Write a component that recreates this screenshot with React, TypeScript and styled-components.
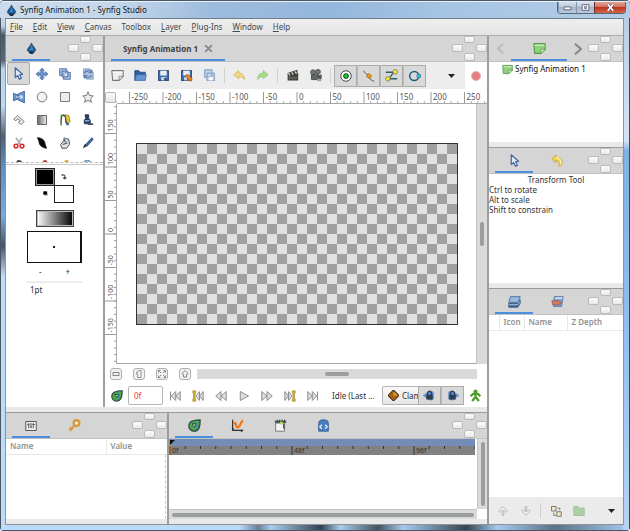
import React, { useState } from "react";
import type { ReactNode } from "react";
import styled, { createGlobalStyle } from "styled-components";

const GlobalStyle = createGlobalStyle`
  * { box-sizing: border-box; }
  html, body, #root { height: 100%; }
  body {
    margin: 0;
    overflow: hidden;
    font: 8px/10px "Noto Sans", "Open Sans", sans-serif;
    color: #2b2f31;
  }
  button, input {
    font: inherit;
    color: inherit;
    margin: 0;
    padding: 0;
    border: 0;
    background: none;
  }
  svg { display: block; flex: none; }
`;

/* ---------- window frame ---------- */

const Frame = styled.div`
  display: flex;
  flex-direction: column;
  height: 100vh;
  min-height: 480px;
  padding: 0 6px 6px 5px;
  border-radius: 4px;
  border-top: 1px solid #4b5865;
  background:
    linear-gradient(to right, #4a5662 0 1px, transparent 1px),
    linear-gradient(to left, #3c4a58 0 1px, transparent 1px),
    linear-gradient(to top, #46586a 0 1px, transparent 1px),
    linear-gradient(#c9d9ea 0, #bfd3ea 25px, #46586c 34px, #59697c 60px, #bcd5ef 68px, #bcd9f5 105px, #4d6075 135px, #5f8fbd 165px, #77acdb 215px, #45536a 245px, #bfdcf8 275px, #bcdcfa 100%) left / 6px 100% no-repeat,
    linear-gradient(#b5cbe4 0, #d5e4f4 140px, #7fb0e6 150px, #8cbcf0 300px, #b6d4f2 100%) right / 7px 100% no-repeat,
    linear-gradient(to right, #b9daf9 0 38%, #6b7f93 41%, #a8cdee 43%, #34424f 51%, #a9ccea 54%, #45525f 60%, #a5caeb 64%, #37444f 74%, #a5cbed 79%, #5c7186 88%, #a5cbed 100%) bottom / 100% 7px no-repeat,
    #a9c6e3;
`;

const TitleBar = styled.header`
  display: flex;
  align-items: flex-start;
  flex: none;
  height: 17px;
  margin: 0 -6px 0 -5px;
  padding-left: 6px;
  border-radius: 4px 4px 0 0;
  border-top: 1px solid #e7f0f8;
  background: linear-gradient(100deg, #ccdbeb 0, #c5d8eb 18%, #9dbbdd 34%, #94b7dc 52%, #a6c4e3 70%, #b3cce6 100%);
`;

const AppTitle = styled.h1`
  display: flex;
  align-items: center;
  gap: 3px;
  flex: 1;
  height: 16px;
  margin: 0;
  font-size: 8px;
  font-weight: 400;
  color: #101820;
`;

const WindowButtons = styled.div`
  display: flex;
  height: 12px;
  margin-right: 4px;
  border: 1px solid #56667a;
  border-top: 0;
  border-radius: 0 0 4px 4px;
  overflow: hidden;
`;

const WindowButton = styled.button<{ $close?: boolean }>`
  display: grid;
  place-items: center;
  width: ${(p) => (p.$close ? 31 : 18)}px;
  border-left: ${(p) => (p.$close ? "1px solid #6d2c25" : "1px solid #8799ae")};
  background: ${(p) =>
    p.$close
      ? "linear-gradient(#e3a394 0, #d17360 45%, #bf3620 50%, #d26746 100%)"
      : "linear-gradient(#d5e0ec 0, #bccbdc 45%, #a2b5cb 50%, #b9cade 100%)"};
`;

const Client = styled.div`
  display: flex;
  flex-direction: column;
  flex: 1;
  min-height: 0;
  border: 1px solid #8d9499;
  border-top-color: #6f7d8b;
  background: #e9e9e9;
`;

const MenuBar = styled.nav`
  display: flex;
  align-items: center;
  flex: none;
  gap: 10px;
  height: 17px;
  padding-left: 4px;
  background: linear-gradient(#efefef, #e4e4e4);
  border-bottom: 1px solid #adadad;
`;

const MenuItem = styled.button`
  color: #44484a;
  white-space: nowrap;
`;

/* ---------- docks ---------- */

const Workspace = styled.main`
  display: flex;
  flex: 1;
  min-height: 0;
`;

const Column = styled.div`
  display: flex;
  flex-direction: column;
  flex: 1;
  min-width: 0;
`;

const UpperRow = styled.div`
  display: flex;
  flex: 1;
  min-height: 0;
`;

const LowerRow = styled.div`
  display: flex;
  flex: none;
  height: 111px;
`;

const RightDock = styled.aside`
  display: flex;
  flex-direction: column;
  flex: none;
  width: 136px;
  border-left: 2px solid #9d9d9d;
`;

const Panel = styled.section<{ $width?: number; $height?: number; $divided?: boolean }>`
  display: flex;
  flex-direction: column;
  flex: ${(p) => (p.$width || p.$height ? "none" : "1")};
  width: ${(p) => (p.$width ? `${p.$width}px` : "auto")};
  height: ${(p) => (p.$height ? `${p.$height}px` : "auto")};
  min-width: 0;
  min-height: 0;
  background: #fff;
  border-right: ${(p) => (p.$divided ? "2px solid #9d9d9d" : "0")};
`;

const Splitter = styled.div`
  flex: none;
  height: 6px;
  background: #e9e9e9;
  border-bottom: 1px solid #9a9a9a;
`;

const TabBar = styled.div`
  display: flex;
  flex: none;
  align-items: stretch;
  height: 26px;
  padding-left: 6px;
  gap: 5px;
  overflow: hidden;
  background: #d5d5d5;
  border-bottom: 1px solid #c2c2c2;
`;

const Tab = styled.button<{ $active?: boolean; $width?: number }>`
  display: flex;
  align-items: center;
  justify-content: center;
  gap: 6px;
  width: ${(p) => p.$width ?? 38}px;
  border-top: 2px solid transparent;
  border-bottom: 2px solid ${(p) => (p.$active ? "#4a8fdc" : "transparent")};
  font-weight: 700;
  color: #3c4042;
  white-space: nowrap;
`;

const ArrowButton = styled.button`
  display: grid;
  place-items: center;
  width: 11px;
`;

const ClusterBox = styled.div`
  display: grid;
  flex: none;
  grid-template: 7px 8px 8px / 11px 11px 11px;
  gap: 1px;
  margin-left: auto;
`;

const ClusterButton = styled.button<{ $cell: string }>`
  grid-area: ${(p) => p.$cell};
  border: 1px solid #b9b9b9;
  border-radius: 2px;
  background: linear-gradient(#fbfbfb, #e9e9e9);
`;

function DockCluster() {
  return (
    <ClusterBox>
      <ClusterButton $cell="1 / 2" aria-label="Dock above" />
      <ClusterButton $cell="2 / 1" aria-label="Dock left" />
      <ClusterButton $cell="2 / 3" aria-label="Dock right" />
      <ClusterButton $cell="3 / 2" aria-label="Dock below" />
    </ClusterBox>
  );
}

/* ---------- toolbox ---------- */

const ToolGrid = styled.div`
  display: grid;
  grid-template-columns: repeat(4, 1fr);
  grid-auto-rows: 23px;
  flex: none;
  height: 101px;
  padding: 0 3px 0 1px;
  overflow: hidden;
  border-bottom: 1px dashed #bcbcbc;
`;

const ToolButton = styled.button<{ $active?: boolean }>`
  display: grid;
  place-items: center;
  border: 1px solid ${(p) => (p.$active ? "#a9a9a9" : "transparent")};
  border-radius: 2px;
  background: ${(p) => (p.$active ? "#d8d8d8" : "transparent")};
`;

const Defaults = styled.div`
  display: flex;
  flex-direction: column;
  align-items: center;
  flex: 1;
  margin-top: 1px;
  padding-top: 3px;
  border-top: 1px solid #c9c9c9;
`;

const ColorGrid = styled.div`
  display: grid;
  grid-template-columns: 19px 19px;
  grid-template-rows: 17px 17px;
  place-items: center;
`;

const Swatch = styled.button<{ $color: string }>`
  width: 20px;
  height: 18px;
  border: 1px solid #222;
  box-shadow: inset 0 0 0 1px ${(p) => (p.$color === "#000" ? "#999" : "#fff")};
  background: ${(p) => p.$color};
`;

const MiniButton = styled.button`
  display: grid;
  place-items: center;
`;

const GradientButton = styled.button`
  width: 38px;
  height: 17px;
  margin-top: 8px;
  border: 1px solid #444;
  box-shadow: inset 0 0 0 1px #bbb;
  background: linear-gradient(to right, #fff, #000);
`;

const BrushPreview = styled.div`
  display: grid;
  place-items: center;
  width: 55px;
  height: 32px;
  margin-top: 4px;
  border: 1px solid #111;
  border-right-width: 2px;
  &::after {
    content: "";
    width: 2px;
    height: 2px;
    background: #222;
  }
`;

const BrushSteps = styled.div`
  display: flex;
  justify-content: space-around;
  width: 55px;
  height: 18px;
`;

const SizeField = styled.input`
  width: 55px;
  height: 14px;
  padding-left: 3px;
  border-top: 2px solid #ececec;
`;

/* ---------- canvas ---------- */

const Toolbar = styled.div`
  display: flex;
  align-items: center;
  flex: none;
  height: 27px;
  padding-left: 1px;
  background: #ededed;
`;

const ToolItem = styled.button`
  display: grid;
  place-items: center;
  flex: none;
  width: 23px;
  height: 22px;
`;

const Toggle = styled.button`
  display: grid;
  place-items: center;
  flex: none;
  width: 23px;
  height: 22px;
  border: 1px solid #ababab;
  background: #d9d9d9;
  & + & { border-left-color: #b9b9b9; }
`;

const Separator = styled.i`
  flex: none;
  width: 1px;
  height: 15px;
  margin: 0 3px;
  background: #d0d0d0;
`;

const Spring = styled.span`
  flex: 1;
`;

const RecordButton = styled.button`
  display: grid;
  place-items: center;
  align-self: stretch;
  width: 22px;
  margin-left: 2px;
  background: #fff;
`;

const CanvasGrid = styled.div`
  display: grid;
  flex: 1;
  grid-template-columns: 12px minmax(0, 1fr) 10px;
  grid-template-rows: 15px minmax(0, 1fr);
  min-height: 0;
`;

const Corner = styled.button`
  margin: 3px 1px 1px 0;
  border: 1px solid #b5b5b5;
  border-radius: 2px;
  background: linear-gradient(#fafafa, #e6e6e6);
`;

const RulerTop = styled.div`
  display: flex;
  grid-column: 2 / 4;
  justify-content: center;
  padding-right: 10px;
  border-bottom: 1px solid #a8a8a8;
  svg { overflow: visible; }
`;

const RulerSide = styled.div`
  display: flex;
  align-items: center;
  overflow: hidden;
  border-right: 1px solid #a8a8a8;
`;

const Viewport = styled.div`
  display: grid;
  place-content: center;
  overflow: hidden;
  border-bottom: 1px solid #a8a8a8;
  border-right: 1px solid #c4c4c4;
`;

const Artboard = styled.div`
  width: 322px;
  height: 182px;
  border: 1px solid #333;
  background: repeating-conic-gradient(#a0a0a0 0 25%, #e1e1e1 0 50%) 0 0 / 20px 20px;
`;

const ScrollTrack = styled.div<{ $vertical?: boolean }>`
  display: flex;
  flex: 1;
  align-items: center;
  justify-content: center;
  flex-direction: ${(p) => (p.$vertical ? "column" : "row")};
  padding: ${(p) => (p.$vertical ? "3px 0" : "0 3px")};
  min-width: 0;
  background: #dadada;
`;

const ScrollThumb = styled.div<{ $vertical?: boolean; $length: string }>`
  width: ${(p) => (p.$vertical ? "4px" : p.$length)};
  height: ${(p) => (p.$vertical ? p.$length : "4px")};
  border-radius: 2px;
  background: #9b9e9e;
`;

const ZoomRow = styled.div`
  display: flex;
  align-items: center;
  flex: none;
  gap: 11px;
  height: 20px;
  padding: 0 10px 0 5px;
  ${ScrollTrack} { height: 10px; margin-left: -5px; }
`;

const ZoomButton = styled.button`
  display: grid;
  place-items: center;
  width: 12px;
  height: 12px;
  border: 1px solid #b0b0b0;
  border-radius: 3px;
  background: #f1f1f1;
`;

const PlayRow = styled.div`
  display: flex;
  align-items: center;
  flex: none;
  height: 23px;
`;

const FrameField = styled.input`
  flex: none;
  width: 35px;
  height: 19px;
  padding-left: 5px;
  border: 1px solid #b5b5b5;
  border-radius: 2px;
  color: #f33;
`;

const Status = styled.output`
  flex: 1;
  min-width: 0;
  padding-left: 8px;
  white-space: nowrap;
`;

const InterpolationButton = styled.button`
  display: flex;
  align-items: center;
  flex: none;
  gap: 3px;
  width: 36px;
  height: 19px;
  padding-left: 5px;
  overflow: hidden;
  border: 1px solid #b5b5b5;
  border-right: 0;
  border-radius: 2px 0 0 2px;
  background: linear-gradient(#f8f8f8, #e6e6e6);
`;

const LockToggle = styled(Toggle)`
  height: 19px;
`;

/* ---------- lists ---------- */

const TreeTable = styled.table`
  width: 100%;
  border-collapse: collapse;
  table-layout: fixed;
  th {
    height: 15px;
    padding: 0 0 0 4px;
    text-align: left;
    font-weight: 600;
    color: #929292;
    border-bottom: 1px solid #e8e8e8;
  }
  th + th { border-left: 1px solid #e8e8e8; }
`;

const Fill = styled.div<{ $dashed?: boolean }>`
  flex: 1;
  min-height: 0;
  margin-right: 1px;
  border-right: ${(p) => (p.$dashed ? "1px dashed #c8c8c8" : "0")};
`;

const FootBand = styled.div`
  flex: none;
  height: 5px;
  background: #e9e9e9;
`;

const CanvasList = styled.ul`
  margin: 0;
  padding: 1px 13px;
  list-style: none;
`;

const CanvasEntry = styled.li`
  display: flex;
  align-items: center;
  gap: 2px;
  height: 12px;
  color: #111;
`;

const Hints = styled.div`
  color: #333;
  h2 {
    margin: 0;
    padding: 1px 0 0;
    font-size: 8px;
    font-weight: 400;
    text-align: center;
  }
  p { margin: 0; }
`;

const LayerBar = styled.div`
  display: flex;
  align-items: center;
  flex: none;
  height: 27px;
  padding-left: 2px;
  background: #ebebeb;
`;

/* ---------- timeline ---------- */

const TimeBody = styled.div`
  display: flex;
  flex: 1;
  min-height: 0;
`;

const TimeMain = styled.div`
  display: flex;
  flex-direction: column;
  flex: 1;
  min-width: 0;
`;

const TimeScale = styled.div`
  flex: none;
  height: 16px;
  margin-right: 2px;
  overflow: hidden;
  background: linear-gradient(#738db6 0 7px, #818181 7px);
`;

const ScrollRow = styled.div`
  display: flex;
  flex: none;
  height: 10px;
  border-top: 1px solid #c4c4c4;
`;

const ScrollSide = styled.div`
  display: flex;
  flex: none;
  width: 10px;
  margin-bottom: 10px;
  border-left: 1px solid #c4c4c4;
`;

/* ---------- drawings ---------- */

function Icon({ size = 12, children }: { size?: number; children: ReactNode }) {
  return (
    <svg width={size} height={size} viewBox="0 0 16 16" fill="none" strokeLinejoin="round" aria-hidden="true">
      {children}
    </svg>
  );
}

const Drop = () => (
  <Icon size={11}>
    <path d="M8 0C9 4 14 7 14 11L11 14H5L2 11C2 7 7 4 8 0Z" fill="#175a98" stroke="#24384c" />
    <path d="M8 3L5 10L8 13L11 10Z" fill="#2f86ca" />
    <path d="M4 13L8 11L12 13L10 16H6Z" fill="#243443" />
  </Icon>
);

const Pointer = ({ size = 13 }: { size?: number }) => (
  <Icon size={size}>
    <path d="M4 1V13L7 10.500L9 15L11.500 14L9.500 9.500L13 9Z" fill="#dfe8f5" stroke="#4569a0" strokeWidth="1.500" />
  </Icon>
);

const Page = ({ color, edge, size = 13 }: { color: string; edge: string; size?: number }) => (
  <Icon size={size}>
    <path d="M1 2H15V9L10 14H2Z" fill={color} stroke={edge} strokeWidth="1.300" />
    <path d="M2 4H14" stroke="#fff" strokeOpacity=".5" strokeWidth="2" />
    <path d="M15 9H10V14Z" fill="#fff" stroke={edge} />
  </Icon>
);

const Layers = () => (
  <Icon size={13}>
    <path d="M1 10H12L15 6V10L12 15H1Z" fill="#39659d" stroke="#2b4c77" />
    <path d="M1 9L3 2H15L13 9Z" fill="#9ab7dc" stroke="#3f689c" />
    <path d="M1 12H12L15 8" stroke="#cfdef0" />
  </Icon>
);

const TimeDrop = ({ size = 13 }: { size?: number }) => (
  <Icon size={size}>
    <path d="M15 1C15 9 14 15 7.500 15A6.500 6.500 0 0 1 1 8C1 2 8 1 15 1Z" fill="#4aa846" stroke="#34474e" strokeWidth="1.500" />
    <path d="M8 4C11 4 12 5 12 8S10 12 8 12Z" fill="#4c86cc" />
    <path d="M5 6L10 6L8 10Z" fill="#c6e58a" stroke="#1d3c31" />
  </Icon>
);

const Undo = ({ flip, color = "#e6c64e", edge = "#d6b54c" }: { flip?: boolean; color?: string; edge?: string }) => (
  <Icon size={13}>
    <path
      d={flip ? "M15 7L9 2V5C4 5 2 8 2 13C4 10 6 9.500 9 9.500V12Z" : "M1 7L7 2V5C12 5 14 8 14 13C12 10 10 9.500 7 9.500V12Z"}
      fill={color}
      stroke={edge}
    />
  </Icon>
);

const Caret = () => (
  <svg width="7" height="4" viewBox="0 0 7 4" aria-hidden="true">
    <path d="M0 0H7L3.500 4Z" fill="#222" />
  </svg>
);

const Floppy = ({ mark }: { mark?: boolean }) => (
  <Icon size={13}>
    <path d="M2 2H14V14H2Z" fill="#4271ae" stroke="#2b4c7a" strokeWidth="1.300" />
    <path d="M4 2H12V8H4Z" fill="#e8eef5" />
    <path d="M5 10H11V14H5Z" fill="#c9d3de" />
    <path d="M9 11H11V14H9Z" fill="#27405f" />
    {mark && <path d="M7 8L9 6L15 12L14 15L11 14Z" fill="#ee8120" stroke="#a65b20" strokeWidth=".7" />}
  </Icon>
);

const toolDrawings: [string, ReactNode][] = [
  ["Transform", <Pointer />],
  ["Smooth move", <Icon><path d="M8 0L11 3.500H9.500V6.500H12.500V5L16 8L12.500 11V9.500H9.500V12.500H11L8 16L5 12.500H6.500V9.500H3.500V11L0 8L3.500 5V6.500H6.500V3.500H5Z" fill="#6f93c9" stroke="#4a70ab" /></Icon>],
  ["Scale", <Icon><path d="M1 1H10V10H1ZM6 6H15V15H6Z" fill="#a9bfdf" stroke="#5f7fb2" strokeWidth="1.500" /><path d="M4 4H12V12H4Z" fill="#8aa6d0" stroke="#4b6da4" /><path d="M6 6L10 10M10 7V10H7" stroke="#e4ecf7" strokeWidth="1.300" /></Icon>],
  ["Rotate", <Icon><path d="M2 1H10L15 6V15H6L2 11Z" fill="#a9bedd" stroke="#7f99c2" /><path d="M3 7C4 3 11 3 13 5M13 2V6H9M13 10C11 13 5 13 3 11M3 14V10H7" stroke="#5778ac" strokeWidth="1.600" /></Icon>],
  ["Mirror", <Icon><path d="M0 3L6 5V11L0 13ZM16 0L7 4V12L16 16Z" fill="#6f97cf" stroke="#3d659f" strokeWidth="1.300" /><path d="M4 8H12M10 5.500L12.500 8L10 10.500" stroke="#dfeaf8" strokeWidth="1.500" /></Icon>],
  ["Circle", <Icon><circle cx="8" cy="8" r="6.500" fill="#f1f1f1" stroke="#777" strokeWidth="1.300" /></Icon>],
  ["Rectangle", <Icon><path d="M2 2H14V14H2Z" fill="#ececec" stroke="#777" strokeWidth="1.300" /></Icon>],
  ["Star", <Icon><path d="M8 1L10 6L15 6.500L11.500 10L12.500 15L8 12.500L3.500 15L4.500 10L1 6.500L6 6Z" fill="#eee" stroke="#777" strokeWidth="1.300" /></Icon>],
  ["Polygon", <Icon><path d="M1 7L6 2L15 10L11 14L7 11L10 9L6 6L4 9Z" fill="#f1f1f1" stroke="#777" strokeWidth="1.300" /></Icon>],
  ["Gradient", <Icon><defs><linearGradient id="toolGradient"><stop stopColor="#666" /><stop offset="1" stopColor="#eee" /></linearGradient></defs><path d="M2 2H14V14H2Z" fill="url(#toolGradient)" stroke="#666" strokeWidth="1.300" /></Icon>],
  ["Spline", <Icon><path d="M3 15C3 8 2 5 4 2C9 0 9 6 9 8S9 14 13 14" stroke="#333" strokeWidth="1.800" /><path d="M8 1L13 2L15 10L12 13L10 9Z" fill="#e5c53e" stroke="#8b7728" /><path d="M2 1H5V4H2ZM2 10H4V15H2Z" fill="#5da747" /><path d="M10 12H13V15H10Z" fill="#356fb5" /></Icon>],
  ["Fill", <Icon><path d="M4 1H9V6L11 8V13H3V8L5 6Z" fill="#1e3d70" stroke="#242d3a" /><path d="M4 8H10V10H4Z" fill="#85a9d7" /><path d="M10 11L15 14H8Z" fill="#4978ae" stroke="#333" /></Icon>],
  ["Cutout", <Icon><path d="M4 1L10 10M12 1L6 10" stroke="#aaa" strokeWidth="2" /><circle cx="4" cy="12" r="2.500" stroke="#d72828" strokeWidth="2" /><circle cx="12" cy="12" r="2.500" stroke="#d72828" strokeWidth="2" /></Icon>],
  ["Width", <Icon><path d="M2 1C7 1 12 4 12 9L14 15C8 14 4 11 4 6Z" fill="#080808" stroke="#080808" /></Icon>],
  ["Draw", <Icon><path d="M4 8L9 2L13 3L14 10L10 15H4L2 10Z" fill="#dfe2e5" stroke="#484d52" strokeWidth="1.300" /><path d="M8 1C5 2 7 6 10 7M5 10L11 8" stroke="#4b5a6b" strokeWidth="1.500" /></Icon>],
  ["Sketch", <Icon><path d="M1 15L4 9L7 12Z" fill="#222" /><path d="M4 11L13 1L15 3L7 12Z" fill="#3e6db2" stroke="#273b5a" /></Icon>],
  ["Lasso", <Icon><circle cx="8" cy="4" r="4" fill="#444" /></Icon>],
  ["Sketch erase", <Icon><circle cx="12" cy="3" r="3" fill="#c43434" /></Icon>],
  ["Brush", <Icon><circle cx="10" cy="3" r="3" fill="#e0a234" /></Icon>],
  ["Zoom", <Icon><circle cx="7" cy="5" r="5" fill="#96b7dd" stroke="#5d7ba5" /></Icon>],
];

function Toolbox() {
  const [active, setActive] = useState("Transform");
  return (
    <Panel $width={99} $divided>
      <TabBar>
        <Tab $active aria-label="Toolbox"><Drop /></Tab>
        <DockCluster />
      </TabBar>
      <ToolGrid>
        {toolDrawings.map(([name, drawing]) => (
          <ToolButton key={name} aria-label={name} $active={active === name} onClick={() => setActive(name)}>
            {drawing}
          </ToolButton>
        ))}
      </ToolGrid>
      <Defaults>
        <ColorGrid>
          <Swatch $color="#000" aria-label="Outline color" />
          <MiniButton aria-label="Swap colors">
            <Icon size={6}><path d="M2 3H10V12M2 3L6 0M10 14L6 10H14Z" stroke="#333" strokeWidth="2.500" /></Icon>
          </MiniButton>
          <MiniButton aria-label="Default colors">
            <Icon size={5}><path d="M1 1H13V12H1Z" fill="#000" /><path d="M14 6V15H5" stroke="#999" strokeWidth="2" /></Icon>
          </MiniButton>
          <Swatch $color="#fff" aria-label="Fill color" />
        </ColorGrid>
        <GradientButton aria-label="Default gradient" />
        <BrushPreview />
        <BrushSteps>
          <button aria-label="Decrease brush">-</button>
          <button aria-label="Increase brush">+</button>
        </BrushSteps>
        <SizeField aria-label="Brush size" defaultValue="1pt" />
      </Defaults>
    </Panel>
  );
}

const STEP = 33.5;

function HorizontalRuler() {
  const marks = Array.from({ length: 11 }, (_, i) => (i - 5) * 50);
  return (
    <svg width="336" height="14" fontSize="8" fill="#555">
      <path d="M-13 12V14M-6 12V14" stroke="#aaa" />
      {marks.map((m) => {
        const x = 168 + (m / 50) * STEP;
        return (
          <g key={m}>
            <path d={`M${x} 3V14`} stroke="#999" />
            {[1, 2, 3].map((n) => <path key={n} d={`M${x + n * 6.7} 12V14`} stroke="#aaa" />)}
            {m < 250 && <path d={`M${x + 26.8} 12V14`} stroke="#aaa" />}
            <text x={x + 2} y="11">{m}</text>
          </g>
        );
      })}
    </svg>
  );
}

function VerticalRuler() {
  const marks = Array.from({ length: 7 }, (_, i) => (3 - i) * 50);
  const minor = Array.from({ length: 39 }, (_, i) => 130 + (i - 19) * 6.7);
  return (
    <svg width="11" height="260" fontSize="7" fill="#555">
      {minor.map((y) => <path key={y} d={`M9 ${y}H11`} stroke="#999" />)}
      {marks.map((m) => {
        const y = 130 - (m / 50) * STEP;
        return (
          <g key={m}>
            <path d={`M0 ${y}H11`} stroke="#999" />
            <text transform={`translate(8 ${y - 2}) rotate(-90)`}>{m}</text>
          </g>
        );
      })}
    </svg>
  );
}

const playShapes: [string, string, boolean?, boolean?][] = [
  ["Seek to begin", "M2 2V14M15 2L9 8L15 14ZM9 2L3 8L9 14Z"],
  ["Previous keyframe", "M15 2L10 8L15 14ZM10 2L5 8L10 14Z", true],
  ["Previous frame", "M15 2L8 8L15 14ZM8 2L1 8L8 14Z"],
  ["Play", "M3 2L14 8L3 14Z"],
  ["Next frame", "M1 2L8 8L1 14ZM8 2L15 8L8 14Z"],
  ["Next keyframe", "M1 2L6 8L1 14ZM6 2L11 8L6 14Z", false, true],
  ["Seek to end", "M1 2L7 8L1 14ZM7 2L13 8L7 14ZM14 2V14"],
];

const LockIcon = ({ flip }: { flip?: boolean }) => (
  <Icon size={13}>
    <path d={flip ? "M9 2L0 8L9 14L13 12V4Z" : "M7 2L16 8L7 14L3 12V4Z"} fill="#5b95d6" stroke="#6a9bd2" />
    <path d="M4 7H12V13H4Z" fill="#2f3c4b" />
    <path d="M5.500 8V5.500A2.500 2.500 0 0 1 10.500 5.500V8" stroke="#2f3c4b" strokeWidth="1.600" />
  </Icon>
);

function CanvasPanel() {
  return (
    <Panel>
      <TabBar>
        <Tab $active $width={114}>
          Synfig Animation 1
          <Icon size={9}><path d="M2 2L14 14M14 2L2 14" stroke="#8b8b8b" strokeWidth="3.500" /></Icon>
        </Tab>
        <DockCluster />
      </TabBar>
      <Toolbar>
        <ToolItem aria-label="New"><Page color="#eee" edge="#777" /></ToolItem>
        <ToolItem aria-label="Open">
          <Icon size={13}><path d="M1 14V2H6L8 4H14V7" fill="#315f9c" stroke="#244a7d" /><path d="M1 14L3 7H15L14 14Z" fill="#6996d1" stroke="#3869aa" /></Icon>
        </ToolItem>
        <ToolItem aria-label="Save"><Floppy /></ToolItem>
        <ToolItem aria-label="Save as"><Floppy mark /></ToolItem>
        <ToolItem aria-label="Save all">
          <Icon size={13}><path d="M2 1H11V10H2ZM5 5H14V14H5Z" fill="#c6d5e7" stroke="#8ba6c6" strokeWidth="1.500" /><path d="M7 10H12V14H7Z" fill="#fff" /></Icon>
        </ToolItem>
        <Separator />
        <ToolItem aria-label="Undo"><Undo color="#edd793" /></ToolItem>
        <ToolItem aria-label="Redo"><Undo flip color="#a8da84" edge="#90c778" /></ToolItem>
        <Separator />
        <ToolItem aria-label="Render">
          <Icon size={13}><path d="M2 5L14 1V5H15V14H2Z" fill="#3b3b38" /><path d="M3 5L5 8M7 4L9 7M11 3L13 6" stroke="#ddd" strokeWidth="1.500" /><path d="M3 10H14M3 12H14" stroke="#77776f" /></Icon>
        </ToolItem>
        <ToolItem aria-label="Preview">
          <Icon size={13}><circle cx="5" cy="4" r="3" fill="#777" stroke="#444" /><circle cx="11" cy="3.500" r="3" fill="#777" stroke="#444" /><path d="M3 7H12V13H3ZM12 9L15 7V12L12 11Z" fill="#5f6467" stroke="#444" /><path d="M10 12H15V15H10Z" fill="#8aa3c3" /></Icon>
        </ToolItem>
        <Separator />
        <Toggle aria-label="Position handles" aria-pressed="true">
          <Icon><circle cx="8" cy="8" r="7" fill="#fff" stroke="#444" strokeWidth="1.300" /><circle cx="8" cy="8" r="3" fill="#20d32b" stroke="#175b1d" strokeWidth="1.500" /></Icon>
        </Toggle>
        <Toggle aria-label="Vertex handles" aria-pressed="true">
          <Icon><path d="M1 1C3 7 6 4 8 8S10 14 15 15" stroke="#555" strokeWidth="1.300" /><path d="M8 4.500L11.500 8L8 11.500L4.500 8Z" fill="#f39a18" stroke="#9a5b16" /></Icon>
        </Toggle>
        <Toggle aria-label="Tangent handles" aria-pressed="true">
          <Icon size={13}><path d="M1 4H12M3 12H15M12 4C7 5 9 11 3 12" stroke="#355864" strokeWidth="1.600" /><circle cx="12.500" cy="3.500" r="2.800" fill="#f2e83a" stroke="#776" /><circle cx="3.500" cy="12" r="2.800" fill="#f2e83a" stroke="#776" /></Icon>
        </Toggle>
        <Toggle aria-label="Radius handles" aria-pressed="true">
          <Icon><circle cx="7" cy="8" r="6" stroke="#215c7b" strokeWidth="2" /><circle cx="13" cy="8" r="2.500" fill="#2ad6e6" stroke="#215c7b" /></Icon>
        </Toggle>
        <Spring />
        <ToolItem aria-label="More tools"><Caret /></ToolItem>
        <RecordButton aria-label="Record">
          <Icon><circle cx="8" cy="8" r="6" fill="#e77b80" stroke="#e5b7b9" strokeWidth="1.500" /></Icon>
        </RecordButton>
      </Toolbar>
      <CanvasGrid>
        <Corner aria-label="Canvas menu" />
        <RulerTop><HorizontalRuler /></RulerTop>
        <RulerSide><VerticalRuler /></RulerSide>
        <Viewport><Artboard /></Viewport>
        <ScrollTrack $vertical><ScrollThumb $vertical $length="24px" /></ScrollTrack>
      </CanvasGrid>
      <ZoomRow>
        <ZoomButton aria-label="Zoom out"><Icon size={8}><path d="M2 5H14V11H2Z" stroke="#777" strokeWidth="1.800" /></Icon></ZoomButton>
        <ZoomButton aria-label="Zoom normal"><Icon size={8}><path d="M5 3L8 1H12V15H5V8H3V5H5Z" stroke="#888" strokeWidth="1.800" /></Icon></ZoomButton>
        <ZoomButton aria-label="Zoom fit"><Icon size={8}><path d="M1 5V1H5M11 1H15V5M1 11V15H5M11 15H15V11M3 3L6 6M13 3L10 6M3 13L6 10M13 13L10 10" stroke="#777" strokeWidth="1.800" /></Icon></ZoomButton>
        <ZoomButton aria-label="Zoom in"><Icon size={8}><path d="M8 1L14 7L11 9V14H5V9L2 7Z" stroke="#777" strokeWidth="1.800" /></Icon></ZoomButton>
        <ScrollTrack><ScrollThumb $length="24px" /></ScrollTrack>
      </ZoomRow>
      <PlayRow>
        <ToolItem aria-label="Time settings"><TimeDrop size={12} /></ToolItem>
        <FrameField aria-label="Current frame" defaultValue="0f" />
        {playShapes.map(([name, path, before, after]) => (
          <ToolItem key={name} aria-label={name}>
            <Icon>
              <path d={path} fill="#ddd" stroke="#8d8d8d" strokeWidth="1.300" />
              {before && <path d="M1 1H5V4L4 5V11L5 12V15H1V12L2 11V5L1 4Z" fill="#d5af26" stroke="#91782b" strokeWidth=".7" />}
              {after && <path d="M11 1H15V4L14 5V11L15 12V15H11V12L12 11V5L11 4Z" fill="#d5af26" stroke="#91782b" strokeWidth=".7" />}
            </Icon>
          </ToolItem>
        ))}
        <Status>Idle (Last ...</Status>
        <InterpolationButton aria-label="Clamped">
          <Icon size={11}><path d="M8 0L16 8L8 16L0 8Z" fill="#a66410" stroke="#442e12" strokeWidth="1.500" /><path d="M8 2L14 8L8 8Z" fill="#e0a142" /></Icon>
          Clamped
        </InterpolationButton>
        <LockToggle aria-label="Lock past keyframe" aria-pressed="true"><LockIcon flip /></LockToggle>
        <LockToggle aria-label="Lock future keyframe" aria-pressed="true"><LockIcon /></LockToggle>
        <ToolItem aria-label="Animate mode">
          <Icon size={13}><circle cx="8" cy="3" r="2.500" fill="#4f9d29" /><path d="M8 5V10M2 9L5 6H11L14 9M8 9L4 15M8 9L12 15" stroke="#4f9d29" strokeWidth="2.800" /></Icon>
        </ToolItem>
      </PlayRow>
    </Panel>
  );
}

function TimeTicks() {
  return (
    <svg width="100%" height="16" fontSize="7" fill="#333">
      <path d="M1 6V16" stroke="#e5a324" strokeWidth="2" />
      <path d="M1 1H6L1 6Z" fill="#111" />
      {Array.from({ length: 76 }, (_, i) => (
        <path key={i} d={`M${1 + i * 15.25} 7V${i % 8 === 0 ? 16 : 10}`} stroke="#333" />
      ))}
      {[0, 1, 2].map((i) => (
        <text key={i} x={3 + i * 122} y="14">{`${i * 48}f`}</text>
      ))}
    </svg>
  );
}

function ParamsPanel() {
  return (
    <Panel $width={163} $divided>
      <TabBar>
        <Tab $active aria-label="Parameters">
          <Icon size={12}><path d="M1 2H15V14H1Z" fill="#eee" stroke="#555" strokeWidth="1.300" /><path d="M5 4V11M8 4V11M11 4V11M3 6H6M7 9H9M10 6H13" stroke="#555" strokeWidth="1.300" /></Icon>
        </Tab>
        <Tab aria-label="Keyframes">
          <Icon size={13}><circle cx="10.500" cy="5" r="3.500" fill="#eee" stroke="#d69c42" strokeWidth="3" /><path d="M8 8L2 14M2 11L5 14" stroke="#d69c42" strokeWidth="3" /></Icon>
        </Tab>
        <DockCluster />
      </TabBar>
      <TreeTable>
        <colgroup><col width="100" /><col /></colgroup>
        <thead><tr><th>Name</th><th>Value</th></tr></thead>
      </TreeTable>
      <Fill $dashed />
      <FootBand />
    </Panel>
  );
}

function TimelinePanel() {
  return (
    <Panel>
      <TabBar>
        <Tab $active aria-label="Timetrack"><TimeDrop /></Tab>
        <Tab aria-label="Curves">
          <Icon size={13}><path d="M2 1V14H15M1 12H4M13 13V16" stroke="#333" strokeWidth="1.500" /><path d="M3 6C7 1 5 12 9 10S11 3 15 2" stroke="#f07818" strokeWidth="2.800" /></Icon>
        </Tab>
        <Tab aria-label="Canvas metadata">
          <Icon size={13}><path d="M2 5H13V15H2Z" fill="#f5f5f5" stroke="#666" /><path d="M1 2H15V5H1Z" fill="#516e59" /><path d="M4 1V4M7 1V4M10 1V4M13 1V4M12 6V12" stroke="#333" strokeWidth="1.300" /><circle cx="9" cy="5" r="2" fill="#b4d85b" /></Icon>
        </Tab>
        <Tab aria-label="Sound">
          <Icon size={13}><path d="M2 6C2 2 4 1 8 1S14 2 14 6V15H2Z" fill="#4c7ebc" stroke="#315b91" /><path d="M6 7L3.500 9.500L6 12M10 7L12.500 9.500L10 12" stroke="#dce9f8" strokeWidth="1.800" /></Icon>
        </Tab>
        <DockCluster />
      </TabBar>
      <TimeBody>
        <TimeMain>
          <TimeScale><TimeTicks /></TimeScale>
          <Fill />
          <ScrollRow><ScrollTrack><ScrollThumb $length="100%" /></ScrollTrack></ScrollRow>
        </TimeMain>
        <ScrollSide><ScrollTrack $vertical><ScrollThumb $vertical $length="100%" /></ScrollTrack></ScrollSide>
      </TimeBody>
      <FootBand />
    </Panel>
  );
}

function RightPanels() {
  return (
    <RightDock>
      <Panel $height={106}>
        <TabBar>
          <ArrowButton aria-label="Previous tab"><Icon size={11}><path d="M12 1L4 8L12 15" stroke="#b8b8b8" strokeWidth="2.500" /></Icon></ArrowButton>
          <Tab $active $width={59} aria-label="Canvases"><Page color="#8fd17a" edge="#559b49" /></Tab>
          <ArrowButton aria-label="Next tab"><Icon size={12}><path d="M4 1L12 8L4 15" stroke="#858585" strokeWidth="2.800" /></Icon></ArrowButton>
          <DockCluster />
        </TabBar>
        <CanvasList>
          <CanvasEntry><Page color="#8fd17a" edge="#559b49" size={11} />Synfig Animation 1</CanvasEntry>
        </CanvasList>
      </Panel>
      <Splitter />
      <Panel $height={135}>
        <TabBar>
          <Tab $active aria-label="Tool options"><Pointer /></Tab>
          <Tab aria-label="History">
            <Icon size={13}><path d="M1 6L6 1V4C12 4 15 8 13 14C11 15 9 14 9 14C11 10 9 8 6 8V11Z" fill="#f2d452" stroke="#c69f32" /><path d="M6 4C10 5 13 8 12 13" stroke="#fff3a5" strokeWidth="1.500" /></Icon>
          </Tab>
          <DockCluster />
        </TabBar>
        <Hints>
          <h2>Transform Tool</h2>
          <p>Ctrl to rotate</p>
          <p>Alt to scale</p>
          <p>Shift to constrain</p>
        </Hints>
      </Panel>
      <Splitter />
      <Panel>
        <TabBar>
          <Tab $active aria-label="Layers"><Layers /></Tab>
          <Tab aria-label="Library">
            <Icon size={13}><path d="M4 2H15L13 14H3Z" fill="#7c99c6" stroke="#58749f" /><path d="M5 4H14" stroke="#dce6f3" strokeWidth="2" /><path d="M1 7H9L13 10L8 12H2Z" fill="#cf7961" stroke="#9d6458" /></Icon>
          </Tab>
          <DockCluster />
        </TabBar>
        <TreeTable>
          <colgroup><col width="10" /><col width="25" /><col width="43" /><col /></colgroup>
          <thead><tr><th aria-label="Visible" /><th>Icon</th><th>Name</th><th>Z Depth</th></tr></thead>
        </TreeTable>
        <Fill />
        <LayerBar>
          <ToolItem aria-label="Raise layer"><Icon><path d="M8 2L14 8L12 10L9 7V14H7V7L4 10L2 8Z" fill="#eee" stroke="#b9b9b9" strokeWidth="1.300" /></Icon></ToolItem>
          <ToolItem aria-label="Lower layer"><Icon><path d="M8 14L14 8L12 6L9 9V2H7V9L4 6L2 8Z" fill="#eee" stroke="#b9b9b9" strokeWidth="1.300" /></Icon></ToolItem>
          <Separator />
          <ToolItem aria-label="Duplicate layer">
            <Icon><path d="M2 2H8V8H2ZM9 9H15V15H9Z" fill="#f2e6c1" stroke="#777" strokeWidth="1.300" /><path d="M5 10V14H8M10 4H13V7" stroke="#888" strokeWidth="1.500" /></Icon>
          </ToolItem>
          <ToolItem aria-label="Group layer"><Icon><path d="M1 2H7V4H15V14H1Z" fill="#acd0a4" stroke="#9abb94" /></Icon></ToolItem>
          <Spring />
          <ToolItem aria-label="More layer actions"><Caret /></ToolItem>
        </LayerBar>
      </Panel>
    </RightDock>
  );
}

const menus: [string, string, string][] = [
  ["", "F", "ile"], ["", "E", "dit"], ["", "V", "iew"], ["", "C", "anvas"], ["Toolbox", "", ""],
  ["", "L", "ayer"], ["", "P", "lug-Ins"], ["", "W", "indow"], ["", "H", "elp"],
];

export default function App() {
  return (
    <>
      <GlobalStyle />
      <Frame>
        <TitleBar>
          <AppTitle><Drop />Synfig Animation 1 - Synfig Studio</AppTitle>
          <WindowButtons>
            <WindowButton aria-label="Minimize"><Icon size={9}><path d="M2 7H14V12H2Z" fill="#fff" stroke="#556" strokeWidth="1.500" /></Icon></WindowButton>
            <WindowButton aria-label="Maximize"><Icon size={9}><path d="M2 3H14V13H2Z" fill="#fff" stroke="#556" strokeWidth="1.500" /><path d="M6 6H10V10H6Z" fill="#9fb2c8" stroke="#556" /></Icon></WindowButton>
            <WindowButton $close aria-label="Close"><Icon size={9}><path d="M3 2L13 14M13 2L3 14" stroke="#534" strokeWidth="5" /><path d="M3 2L13 14M13 2L3 14" stroke="#fff" strokeWidth="3" /></Icon></WindowButton>
          </WindowButtons>
        </TitleBar>
        <Client>
          <MenuBar>
            {menus.map(([plain, key, rest]) => (
              <MenuItem key={plain + key + rest}>{plain}{key && <u>{key}</u>}{rest}</MenuItem>
            ))}
          </MenuBar>
          <Workspace>
            <Column>
              <UpperRow>
                <Toolbox />
                <CanvasPanel />
              </UpperRow>
              <Splitter />
              <LowerRow>
                <ParamsPanel />
                <TimelinePanel />
              </LowerRow>
            </Column>
            <RightPanels />
          </Workspace>
        </Client>
      </Frame>
    </>
  );
}
